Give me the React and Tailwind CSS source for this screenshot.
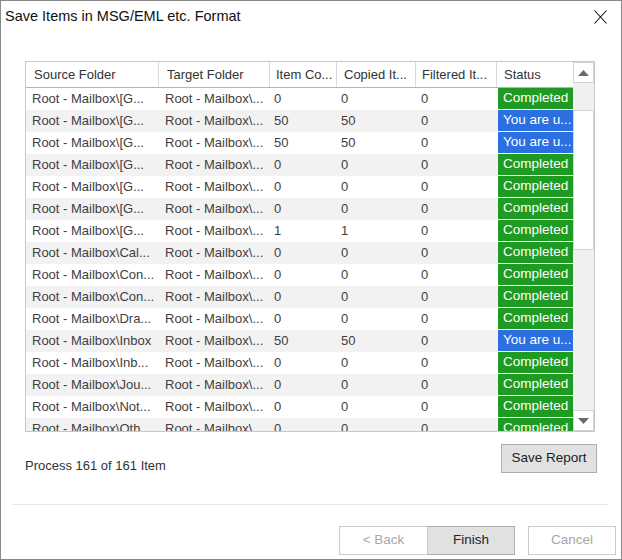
import React from "react";

const columns = [
  { label: "Source Folder", w: "w-[133px]", pad: "pl-[8px]" },
  { label: "Target Folder", w: "w-[111px]", pad: "pl-[8px]" },
  { label: "Item Co...", w: "w-[67px]", pad: "pl-[6px]" },
  { label: "Copied It...", w: "w-[79px]", pad: "pl-[7px]" },
  { label: "Filtered It...", w: "w-[81px]", pad: "pl-[6px]" },
  { label: "Status", w: "w-[76px]", pad: "pl-[7px]" },
];

const rows = [
  ["[G...", "0", "0", "0", "done"],
  ["[G...", "50", "50", "0", "busy"],
  ["[G...", "50", "50", "0", "busy"],
  ["[G...", "0", "0", "0", "done"],
  ["[G...", "0", "0", "0", "done"],
  ["[G...", "0", "0", "0", "done"],
  ["[G...", "1", "1", "0", "done"],
  ["Cal...", "0", "0", "0", "done"],
  ["Con...", "0", "0", "0", "done"],
  ["Con...", "0", "0", "0", "done"],
  ["Dra...", "0", "0", "0", "done"],
  ["Inbox", "50", "50", "0", "busy"],
  ["Inb...", "0", "0", "0", "done"],
  ["Jou...", "0", "0", "0", "done"],
  ["Not...", "0", "0", "0", "done"],
  ["Oth...", "0", "0", "0", "done"],
];

function Row({ r, i }) {
  const stripe = i % 2 === 1 ? "bg-[#f2f2f2]" : "bg-white";
  return (
    <div className={`flex h-[22px] shrink-0 items-center text-[13px] text-[#404040] ${stripe}`}>
      <div className="w-[133px] pl-[6px] whitespace-nowrap">Root - Mailbox\{r[0]}</div>
      <div className="w-[111px] pl-[6px] whitespace-nowrap">Root - Mailbox\...</div>
      <div className="w-[67px] pl-[4px]">{r[1]}</div>
      <div className="w-[79px] pl-[4px]">{r[2]}</div>
      <div className="w-[81px] pl-[5px]">{r[3]}</div>
      <div className="w-[76px] h-full pl-[1px] pb-[1px]">
        <div
          className={`h-full pl-[5px] flex items-center text-white text-[13.5px] whitespace-nowrap ${
            r[4] === "done" ? "bg-[#1f9a22]" : "bg-[#2b6fe0]"
          }`}
        >
          {r[4] === "done" ? "Completed" : "You are u..."}
        </div>
      </div>
    </div>
  );
}

function Arrow({ down }) {
  return (
    <svg width="11" height="6" viewBox="0 0 11 6">
      <path d={down ? "M0 0 L11 0 L5.5 6 Z" : "M0 6 L11 6 L5.5 0 Z"} fill="#6a6a6a" />
    </svg>
  );
}

export default function App() {
  return (
    <div
      className="w-[622px] h-[560px] bg-white border border-[#8a8a8a] flex flex-col text-[#333]"
      style={{ fontFamily: '"Liberation Sans", Arial, sans-serif' }}
    >
      <div className="h-[32px] flex items-center justify-between pl-[4px] pr-[14px]">
        <span className="text-[14.5px] text-[#111]">Save Items in MSG/EML etc. Format</span>
        <svg width="13" height="14" viewBox="0 0 13 14">
          <path d="M0.5 0.5 L12.5 13.5 M12.5 0.5 L0.5 13.5" stroke="#111" strokeWidth="1.1" />
        </svg>
      </div>

      <div className="mt-[28px] ml-[24px] w-[570px] h-[371px] border border-[#c8c8c8] flex">
        <div className="w-[547px] flex flex-col overflow-hidden">
          <div className="flex h-[26px] shrink-0 border-b border-[#b4b4b4] text-[13px] text-[#333]">
            {columns.map((c, i) => (
              <div
                key={c.label}
                className={`${c.w} ${c.pad} flex items-center whitespace-nowrap ${
                  i < columns.length - 1 ? "border-r border-[#dadada]" : ""
                }`}
              >
                {c.label}
              </div>
            ))}
          </div>
          {rows.map((r, i) => (
            <Row key={i} r={r} i={i} />
          ))}
        </div>
        <div className="w-[21px] flex flex-col bg-[#f0f0f0]">
          <div className="h-[21px] bg-white border border-[#d4d4d4] flex items-center justify-center">
            <Arrow />
          </div>
          <div className="h-[27px]" />
          <div className="h-[140px] bg-white border border-[#d4d4d4]" />
          <div className="flex-1" />
          <div className="h-[21px] bg-white border border-[#d4d4d4] flex items-center justify-center">
            <Arrow down />
          </div>
        </div>
      </div>

      <div className="mt-[12px] ml-[24px] w-[572px] flex justify-between">
        <span className="mt-[12px] text-[13px] text-[#333]">Process 161 of 161 Item</span>
        <button className="w-[96px] h-[29px] bg-[#e1e1e1] border border-[#adadad] text-[13.5px] text-[#222]">
          Save Report
        </button>
      </div>

      <div className="mt-[28px] ml-[11px] w-[596px] h-px bg-[#e6e6e6]" />

      <div className="mt-[21px] flex pl-[338px]">
        <button className="w-[89px] h-[29px] bg-white border border-[#cccccc] text-[13.5px] text-[#a8a8a8]">
          &lt; Back
        </button>
        <button className="w-[87px] h-[29px] bg-[#e1e1e1] border border-[#adadad] border-l-0 text-[13.5px] text-[#222]">
          Finish
        </button>
        <button className="ml-[13px] w-[88px] h-[29px] bg-white border border-[#cccccc] text-[13.5px] text-[#a8a8a8]">
          Cancel
        </button>
      </div>
    </div>
  );
}
